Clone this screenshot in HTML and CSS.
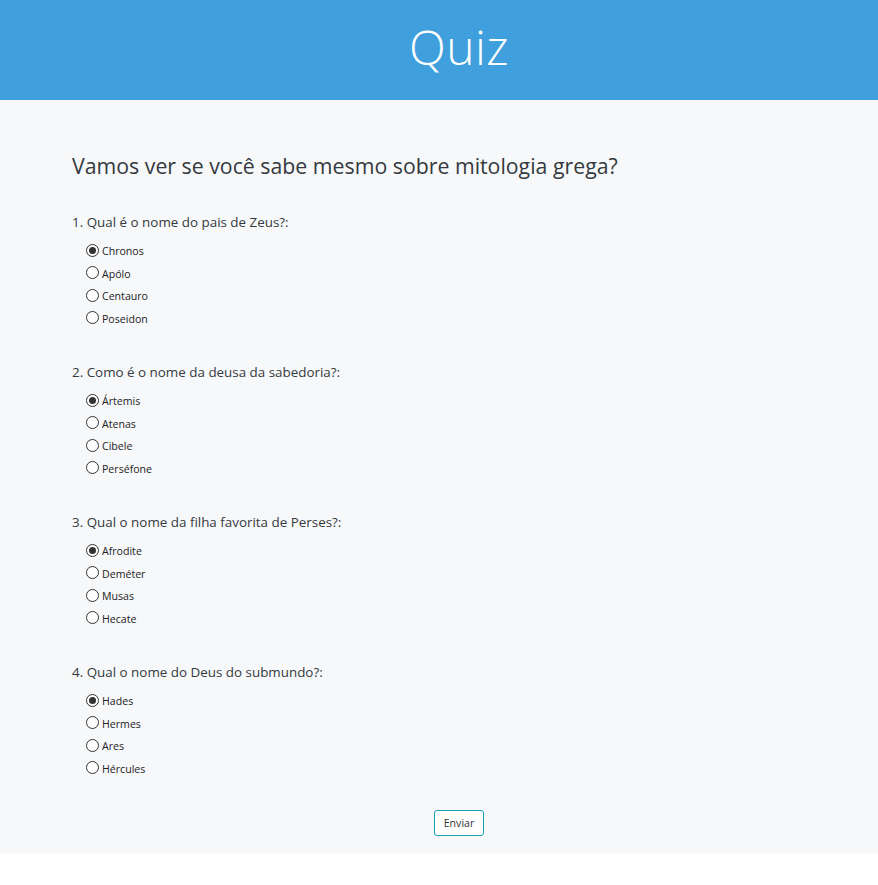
FILE: index.html
```html
<!DOCTYPE html>
<html lang="pt">
<head>
<meta charset="utf-8">
<title>Quiz</title>
<link rel="stylesheet" href="styles.css">
</head>
<body>
<header class="top"><span class="brand">Quiz</span></header>
<main class="page">
  <h1 class="title">Vamos ver se você sabe mesmo sobre mitologia grega?</h1>
  <form class="quiz">
    <div class="question">
      <p class="q-text">1. Qual é o nome do pais de Zeus?:</p>
      <label class="opt"><input type="radio" name="q1" checked><span>Chronos</span></label>
      <label class="opt"><input type="radio" name="q1"><span>Apólo</span></label>
      <label class="opt"><input type="radio" name="q1"><span>Centauro</span></label>
      <label class="opt"><input type="radio" name="q1"><span>Poseidon</span></label>
    </div>
    <div class="question">
      <p class="q-text">2. Como é o nome da deusa da sabedoria?:</p>
      <label class="opt"><input type="radio" name="q2" checked><span>Ártemis</span></label>
      <label class="opt"><input type="radio" name="q2"><span>Atenas</span></label>
      <label class="opt"><input type="radio" name="q2"><span>Cibele</span></label>
      <label class="opt"><input type="radio" name="q2"><span>Perséfone</span></label>
    </div>
    <div class="question">
      <p class="q-text">3. Qual o nome da filha favorita de Perses?:</p>
      <label class="opt"><input type="radio" name="q3" checked><span>Afrodite</span></label>
      <label class="opt"><input type="radio" name="q3"><span>Deméter</span></label>
      <label class="opt"><input type="radio" name="q3"><span>Musas</span></label>
      <label class="opt"><input type="radio" name="q3"><span>Hecate</span></label>
    </div>
    <div class="question">
      <p class="q-text">4. Qual o nome do Deus do submundo?:</p>
      <label class="opt"><input type="radio" name="q4" checked><span>Hades</span></label>
      <label class="opt"><input type="radio" name="q4"><span>Hermes</span></label>
      <label class="opt"><input type="radio" name="q4"><span>Ares</span></label>
      <label class="opt"><input type="radio" name="q4"><span>Hércules</span></label>
    </div>
    <div class="actions"><button type="button" class="btn">Enviar</button></div>
  </form>
</main>
</body>
</html>
```
FILE: styles.css
```css
* { box-sizing: border-box; }
body {
  margin: 0;
  font-family: "Open Sans", "Noto Sans", sans-serif;
  color: #333;
  background: #fff;
}
.top {
  height: 100px;
  background: #409fdd;
  color: #fff;
  display: flex;
  align-items: center;
  justify-content: center;
  padding: 0 0 8px 40px;
}
.brand {
  font-weight: 300;
  font-size: 48px;
  letter-spacing: 0.5px;
}
.page {
  background: #f7f8fa;
  padding: 50px 72px 17px;
}
.title {
  margin: 0;
  font-size: 21.3px;
  font-weight: 400;
  line-height: 32px;
  color: #343a40;
}
.quiz { margin-top: 30px; }
.question { margin-bottom: 32px; }
.q-text {
  margin: 0 0 8px;
  font-size: 13.4px;
  line-height: 20px;
  color: #343a40;
}
.opt {
  display: flex;
  align-items: center;
  height: 22.5px;
  padding-left: 14px;
  font-size: 10.6px;
  color: #222;
}
.opt input {
  appearance: none;
  -webkit-appearance: none;
  margin: 0 3px 2px 0;
  width: 13px;
  height: 13px;
  border: 1px solid #333;
  border-radius: 50%;
  background: #fff;
  display: grid;
  place-items: center;
}
.opt input:checked::after {
  content: "";
  width: 7px;
  height: 7px;
  border-radius: 50%;
  background: #333;
}
.actions {
  display: flex;
  justify-content: center;
  padding-left: 40px;
  margin-top: -2px;
}
.btn {
  height: 26px;
  padding: 0 9px;
  font-family: inherit;
  font-size: 10.6px;
  color: #333;
  background: #fff;
  border: 1px solid #17a2b8;
  border-radius: 3px;
}
```
